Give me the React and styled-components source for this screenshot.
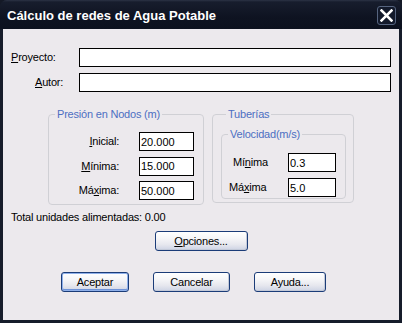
import React from "react";
import styled, { createGlobalStyle } from "styled-components";

const Global = createGlobalStyle`
  html, body { margin: 0; padding: 0; background: #141926; }
  * { box-sizing: border-box; }
`;

const Window = styled.div`
  width: 402px;
  height: 323px;
  display: flex;
  flex-direction: column;
  background: #161c2a;
  border-radius: 7px 7px 0 0;
  overflow: hidden;
  font-family: "Liberation Sans", Arial, sans-serif;
  font-size: 11px;
  letter-spacing: -0.2px;
  color: #000;
`;

const TitleBar = styled.div`
  height: 29px;
  flex: none;
  display: flex;
  align-items: center;
  justify-content: space-between;
  padding: 0 6px 0 7px;
  background: linear-gradient(to bottom, #2c3345 0, #171d2d 2px, #0e1321 60%, #0c111e 100%);
`;

const Title = styled.div`
  font-family: "Liberation Sans", Arial, sans-serif;
  font-weight: bold;
  font-size: 13px;
  letter-spacing: 0;
  color: #ffffff;
  padding-top: 1px;
`;

const CloseButton = styled.div`
  width: 19px;
  height: 19px;
  margin-top: 1px;
  border: 1px solid #56647f;
  border-radius: 3px;
  background: #131a2b;
  display: flex;
  align-items: center;
  justify-content: center;
`;

const Body = styled.div`
  flex: 1;
  margin: 0 3px 3px;
  background: #ece9ed;
  padding: 19px 8px 0;
  display: flex;
  flex-direction: column;
`;

const TopForm = styled.div`
  display: grid;
  grid-template-columns: 68px 1fr;
  row-gap: 6px;
  align-items: center;
`;

const FieldLabel = styled.label`
  padding-left: ${(p) => p.$indent || 0}px;
  line-height: 13px;
  white-space: nowrap;
`;

const TextBox = styled.input`
  height: 19px;
  width: ${(p) => (p.$width ? `${p.$width}px` : "100%")};
  border: 1px solid #000;
  background: #fff;
  padding: 0 0 0 1px;
  margin: 0;
  font-family: "Liberation Sans", Arial, sans-serif;
  font-size: 11px;
  letter-spacing: 0;
  color: #000;
  outline: none;
  border-radius: 0;
`;

const GroupsRow = styled.div`
  display: flex;
  align-items: flex-start;
  gap: 8px;
  margin-top: 16px;
  padding-left: 37px;
`;

const Group = styled.fieldset`
  width: ${(p) => p.$width}px;
  min-width: 0;
  margin: 0;
  border: 1px solid #d0d0d5;
  border-radius: 4px;
  padding: ${(p) => p.$pad};
`;

const Legend = styled.legend`
  color: #4d6fc2;
  font-size: 11px;
  line-height: 13px;
  padding: 0 2px;
  margin-left: ${(p) => p.$ml ?? 6}px;
`;

const FieldGrid = styled.div`
  display: grid;
  grid-template-columns: 1fr ${(p) => p.$input}px;
  column-gap: ${(p) => p.$colGap || 0}px;
  row-gap: ${(p) => p.$rowGap}px;
  align-items: center;
`;

const GroupLabel = styled.label`
  justify-self: ${(p) => (p.$align === "start" ? "start" : "end")};
  padding-left: ${(p) => p.$indent || 0}px;
  line-height: 13px;
`;

const TotalText = styled.div`
  margin-top: 6px;
  line-height: 13px;
`;

const CenterRow = styled.div`
  display: flex;
  justify-content: center;
  margin-top: 7px;
`;

const BottomRow = styled.div`
  display: flex;
  gap: 24px;
  margin-top: 21px;
  padding-left: 50px;
`;

const Button = styled.button`
  width: ${(p) => p.$width}px;
  height: 20px;
  margin: 0;
  padding: 0;
  border: 1px solid #1b3c78;
  border-radius: 3px;
  background: linear-gradient(to bottom, #ffffff 0%, #f6f6f8 35%, #e6e7ee 70%, #cdd3e4 100%);
  box-shadow: ${(p) =>
    p.$default
      ? "inset 0 0 0 1px #8fb0ea, inset 0 -1px 0 1px #6f93d8"
      : "inset -1px -1px 0 #c3c9d8"};
  font-family: "Liberation Sans", Arial, sans-serif;
  font-size: 11px;
  letter-spacing: -0.2px;
  color: #000;
  line-height: 13px;
`;

const U = styled.span`
  text-decoration: underline;
`;

export default function App() {
  return (
    <>
      <Global />
      <Window>
        <TitleBar>
          <Title>Cálculo de redes de Agua Potable</Title>
          <CloseButton>
            <svg width="13" height="13" viewBox="0 0 13 13">
              <path d="M1.5 1.5 L11.5 11.5 M11.5 1.5 L1.5 11.5" stroke="#fff" strokeWidth="2.5" strokeLinecap="square" />
            </svg>
          </CloseButton>
        </TitleBar>
        <Body>
          <TopForm>
            <FieldLabel>
              <U>P</U>royecto:
            </FieldLabel>
            <TextBox defaultValue="" />
            <FieldLabel $indent={24}>
              <U>A</U>utor:
            </FieldLabel>
            <TextBox defaultValue="" />
          </TopForm>

          <GroupsRow>
            <Group $width={156} $pad="11px 9px 4px 0">
              <Legend>Presión en Nodos (m)</Legend>
              <FieldGrid $input={55} $colGap={20} $rowGap={5.5}>
                <GroupLabel>
                  <U>I</U>nicial:
                </GroupLabel>
                <TextBox $width={55} defaultValue="20.000" />
                <GroupLabel>
                  <U>M</U>ínima:
                </GroupLabel>
                <TextBox $width={55} defaultValue="15.000" />
                <GroupLabel>
                  Má<U>x</U>ima:
                </GroupLabel>
                <TextBox $width={55} defaultValue="50.000" />
              </FieldGrid>
            </Group>

            <Group $width={142} $pad="7px 7px 3px 8px">
              <Legend $ml={5}>Tuberías</Legend>
              <Group $width={125} $pad="12px 9px 1px 0">
                <Legend>Velocidad(m/s)</Legend>
                <FieldGrid $input={48} $rowGap={6}>
                  <GroupLabel $align="start" $indent={11}>
                    Mí<U>n</U>ima
                  </GroupLabel>
                  <TextBox $width={48} defaultValue="0.3" />
                  <GroupLabel $align="start" $indent={7}>
                    Má<U>x</U>ima
                  </GroupLabel>
                  <TextBox $width={48} defaultValue="5.0" />
                </FieldGrid>
              </Group>
            </Group>
          </GroupsRow>

          <TotalText>Total unidades alimentadas: 0.00</TotalText>

          <CenterRow>
            <Button $width={93}>
              <U>O</U>pciones...
            </Button>
          </CenterRow>

          <BottomRow>
            <Button $width={68} $default>
              Aceptar
            </Button>
            <Button $width={77}>Cancelar</Button>
            <Button $width={72}>Ayuda...</Button>
          </BottomRow>
        </Body>
      </Window>
    </>
  );
}
